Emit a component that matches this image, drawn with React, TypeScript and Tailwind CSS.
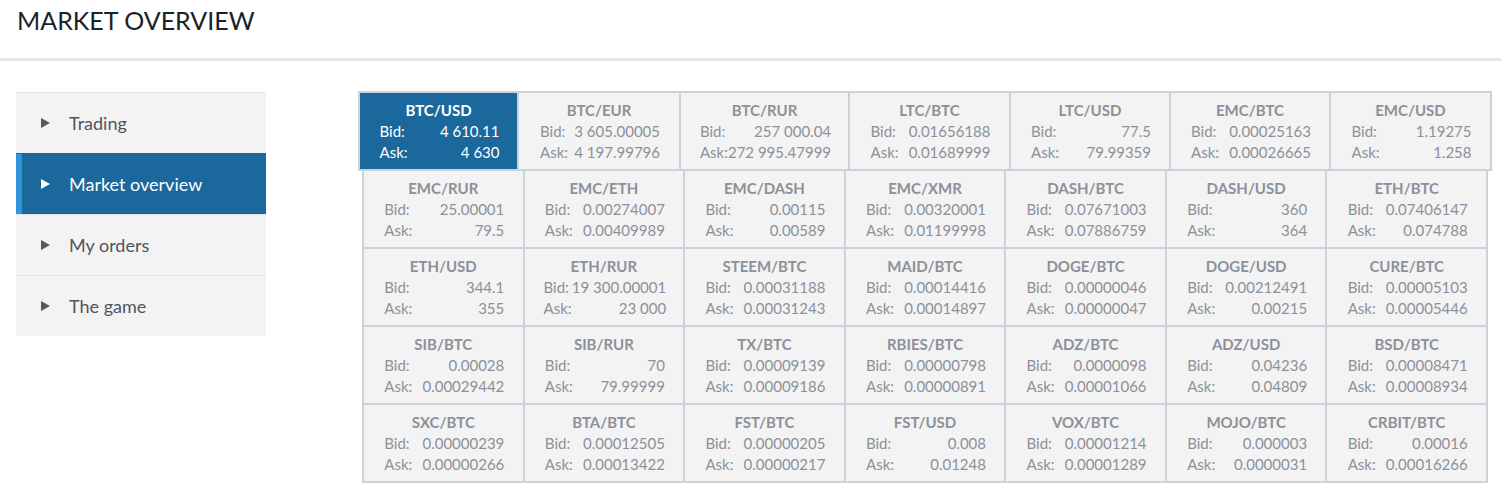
import React from "react";

interface Pair {
  name: string;
  bid: string;
  ask: string;
}

const TOP_ROW: (Pair & { width: string })[] = [
  { name: "BTC/USD", bid: "4 610.11", ask: "4 630", width: "w-[157px]" },
  { name: "BTC/EUR", bid: "3 605.00005", ask: "4 197.99796", width: "w-[160px]" },
  { name: "BTC/RUR", bid: "257 000.04", ask: "272 995.47999", width: "w-[167px]" },
  { name: "LTC/BTC", bid: "0.01656188", ask: "0.01689999", width: "w-[159px]" },
  { name: "LTC/USD", bid: "77.5", ask: "79.99359", width: "w-[158px]" },
  { name: "EMC/BTC", bid: "0.00025163", ask: "0.00026665", width: "w-[158px]" },
  { name: "EMC/USD", bid: "1.19275", ask: "1.258", width: "w-[159px]" },
];

const PAIRS: Pair[] = [
  { name: "EMC/RUR", bid: "25.00001", ask: "79.5" },
  { name: "EMC/ETH", bid: "0.00274007", ask: "0.00409989" },
  { name: "EMC/DASH", bid: "0.00115", ask: "0.00589" },
  { name: "EMC/XMR", bid: "0.00320001", ask: "0.01199998" },
  { name: "DASH/BTC", bid: "0.07671003", ask: "0.07886759" },
  { name: "DASH/USD", bid: "360", ask: "364" },
  { name: "ETH/BTC", bid: "0.07406147", ask: "0.074788" },
  { name: "ETH/USD", bid: "344.1", ask: "355" },
  { name: "ETH/RUR", bid: "19 300.00001", ask: "23 000" },
  { name: "STEEM/BTC", bid: "0.00031188", ask: "0.00031243" },
  { name: "MAID/BTC", bid: "0.00014416", ask: "0.00014897" },
  { name: "DOGE/BTC", bid: "0.00000046", ask: "0.00000047" },
  { name: "DOGE/USD", bid: "0.00212491", ask: "0.00215" },
  { name: "CURE/BTC", bid: "0.00005103", ask: "0.00005446" },
  { name: "SIB/BTC", bid: "0.00028", ask: "0.00029442" },
  { name: "SIB/RUR", bid: "70", ask: "79.99999" },
  { name: "TX/BTC", bid: "0.00009139", ask: "0.00009186" },
  { name: "RBIES/BTC", bid: "0.00000798", ask: "0.00000891" },
  { name: "ADZ/BTC", bid: "0.0000098", ask: "0.00001066" },
  { name: "ADZ/USD", bid: "0.04236", ask: "0.04809" },
  { name: "BSD/BTC", bid: "0.00008471", ask: "0.00008934" },
  { name: "SXC/BTC", bid: "0.00000239", ask: "0.00000266" },
  { name: "BTA/BTC", bid: "0.00012505", ask: "0.00013422" },
  { name: "FST/BTC", bid: "0.00000205", ask: "0.00000217" },
  { name: "FST/USD", bid: "0.008", ask: "0.01248" },
  { name: "VOX/BTC", bid: "0.00001214", ask: "0.00001289" },
  { name: "MOJO/BTC", bid: "0.000003", ask: "0.0000031" },
  { name: "CRBIT/BTC", bid: "0.00016", ask: "0.00016266" },
];

const MENU = ["Trading", "Market overview", "My orders", "The game"];

function PairCell({ pair, active = false, className = "" }: { pair: Pair; active?: boolean; className?: string }) {
  return (
    <div
      className={`h-[76px] pt-[7px] text-[15px] leading-[21px] ${
        active ? "bg-[#1a689c] text-white" : "bg-[#f3f3f3] text-[#8c9199]"
      } ${className}`}
    >
      <div className="text-center font-bold">{pair.name}</div>
      <div className="mx-auto w-fit min-w-[122px] pl-[2px]">
        <div className="flex justify-between gap-[3px] whitespace-nowrap">
          <span>Bid:</span>
          <span>{pair.bid}</span>
        </div>
        <div className="flex justify-between whitespace-nowrap">
          <span>Ask:</span>
          <span>{pair.ask}</span>
        </div>
      </div>
    </div>
  );
}

function Sidebar() {
  return (
    <div className="ml-[16px] w-[250px] shrink-0 bg-[#f3f3f3]">
      {MENU.map((item) => {
        const active = item === "Market overview";
        return (
          <div
            key={item}
            className={`flex h-[61px] items-center border-t ${
              active
                ? "border-[#1a689c] bg-[#1a689c] text-white"
                : "border-[#e4e4e4] text-[#4f555d]"
            }`}
          >
            <div className={`h-full w-[6px] ${active ? "bg-[#3393d8]" : ""}`} />
            <svg width="9" height="10" viewBox="0 0 9 10" className="ml-[19px]">
              <path d="M0 0 L9 5 L0 10 Z" fill={active ? "#ffffff" : "#555a60"} />
            </svg>
            <span className="ml-[19px] text-[18px]">{item}</span>
          </div>
        );
      })}
    </div>
  );
}

export default function App() {
  return (
    <div className="min-h-[483px] bg-white" style={{ fontFamily: "Lato, 'Liberation Sans', sans-serif" }}>
      <div className="h-[58px] pl-[17px] pt-[4px]">
        <h1 className="text-[25px] leading-[32px] text-[#1a2329]">MARKET OVERVIEW</h1>
      </div>
      <div className="h-[3px] bg-[#e6e6e6]" />
      <div className="mt-[31px] flex items-start">
        <Sidebar />
        <div className="ml-[92px]">
          <div className="-mt-[1px] flex w-fit gap-[2px] bg-[#c9d2dd] p-[2px]">
            {TOP_ROW.map((p, i) => (
              <PairCell key={p.name} pair={p} active={i === 0} className={p.width} />
            ))}
          </div>
          <div className="-mt-[2px] ml-[4px] grid w-[1126px] grid-cols-7 gap-[2px] bg-[#c9d2dd] p-[2px]">
            {PAIRS.map((p) => (
              <PairCell key={p.name} pair={p} />
            ))}
          </div>
        </div>
      </div>
    </div>
  );
}
